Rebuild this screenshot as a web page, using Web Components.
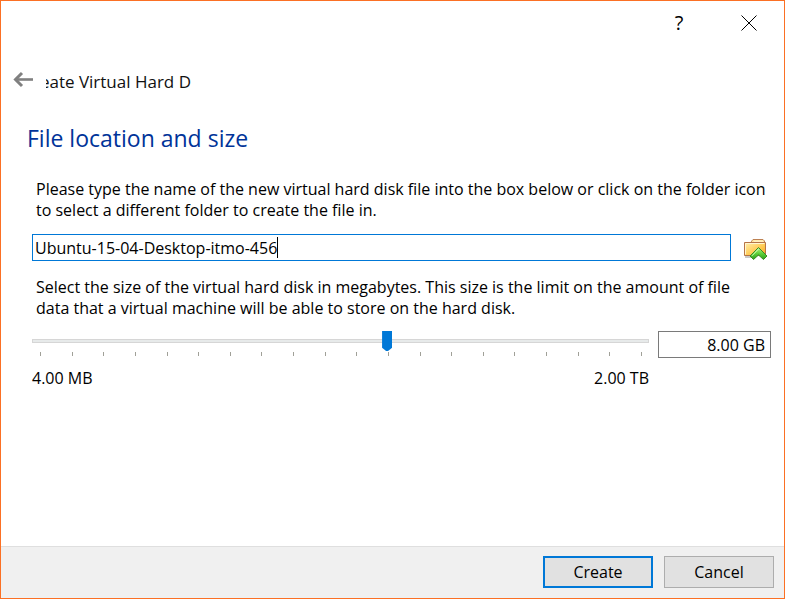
<!DOCTYPE html>
<html lang="en">
<head>
<meta charset="utf-8">
<title>Create Virtual Hard Disk</title>
<style>
html, body { margin: 0; height: 100%; }
body { font: 16px/21px "Open Sans", "Noto Sans", sans-serif; color: #000; background: #fff; }
</style>
</head>
<body>
<wizard-window>
  <title-bar slot="top"></title-bar>
  <wizard-header slot="top" label="eate Virtual Hard D"></wizard-header>
  <wizard-page heading="File location and size">
    <field-note>Please type the name of the new virtual hard disk file into the box below or click on the folder icon<br>to select a different folder to create the file in.</field-note>
    <file-field value="Ubuntu-15-04-Desktop-itmo-456"></file-field>
    <field-note>Select the size of the virtual hard disk in megabytes. This size is the limit on the amount of file<br>data that a virtual machine will be able to store on the hard disk.</field-note>
    <size-field min-label="4.00 MB" max-label="2.00 TB" value="8.00 GB"></size-field>
  </wizard-page>
  <push-button slot="actions" primary>Create</push-button>
  <push-button slot="actions">Cancel</push-button>
</wizard-window>
<script>
function define(name, html, setup) {
  customElements.define(name, class extends HTMLElement {
    constructor() {
      super();
      const t = document.createElement('template');
      t.innerHTML = html;
      this.attachShadow({ mode: 'open' }).appendChild(t.content.cloneNode(true));
      if (setup) setup(this, this.shadowRoot);
    }
  });
}

define('push-button', `
<style>
:host { display: block; }
button { display: block; box-sizing: border-box; width: 110px; height: 32px; padding: 0; border: 1px solid #adadad; background: #e1e1e1; font: inherit; color: inherit; }
:host([primary]) button { border: 2px solid #0078d7; }
</style>
<button type="button"><slot></slot></button>`);

define('title-bar', `
<style>
:host { display: flex; justify-content: flex-end; }
button { width: 70px; height: 43px; padding: 0; border: 0; background: none; display: grid; place-items: center; font: inherit; font-size: 20px; color: #000; }
</style>
<button type="button" aria-label="Help">?</button>
<button type="button" aria-label="Close"><svg width="16" height="16" viewBox="0 0 16 16" stroke="#000"><path d="M.5.5l15 15M15.5.5l-15 15"/></svg></button>`);

define('wizard-header', `
<style>
:host { display: flex; align-items: center; gap: 12px; padding: 22px 12px 0; height: 28px; }
button { padding: 0; border: 0; background: none; width: 21px; height: 20px; }
svg { display: block; }
.title { display: flex; justify-content: flex-end; width: 145px; overflow: hidden; white-space: nowrap; font-size: 17px; color: #111; padding-top: 2px; }
</style>
<button type="button" aria-label="Back"><svg width="22" height="18" viewBox="0 0 22 18" fill="none" stroke="#808080"><path d="M2 8.500H20" stroke-width="2.600"/><path d="M9 2L2.500 8.500L9 15" stroke-width="3"/></svg></button>
<div class="title"><span></span></div>`,
(el, root) => { root.querySelector('span').textContent = el.getAttribute('label'); });

define('wizard-page', `
<style>
:host { display: block; padding: 29px 13px 0 31px; }
h1 { margin: 0 0 26px -5px; font-size: 23px; line-height: 30px; font-weight: 400; color: #003399; }
</style>
<h1></h1><slot></slot>`,
(el, root) => { root.querySelector('h1').textContent = el.getAttribute('heading'); });

define('field-note', `
<style>:host { display: block; padding-left: 4px; white-space: nowrap; }</style><slot></slot>`);

define('file-field', `
<style>
:host { display: flex; align-items: center; gap: 12px; margin: 13px 0 15px; }
.box { position: relative; flex: 1; display: flex; }
input { flex: 1; min-width: 0; box-sizing: border-box; height: 27px; margin-bottom: 1px; padding: 0 2px; border: 1px solid #0078d7; font: inherit; color: #000; background: #fff; outline: 0; }
.caret { position: absolute; top: 3px; width: 1px; height: 21px; background: #000; }
button { padding: 0; margin: 3px 3px 0 0; border: 0; background: none; width: 25px; height: 24px; }
svg { display: block; }
</style>
<div class="box"><input type="text" aria-label="File name" spellcheck="false"><span class="caret"></span></div>
<button type="button" aria-label="Choose folder">
<svg width="25" height="24" viewBox="0 0 25 24">
<defs><linearGradient id="f" x1="0" y1="0" x2="1" y2="1"><stop offset="0" stop-color="#fff0b0"/><stop offset=".6" stop-color="#ffc94f"/><stop offset="1" stop-color="#f5a623"/></linearGradient>
<linearGradient id="g" x1="0" y1="0" x2="0" y2="1"><stop offset="0" stop-color="#b5f58a"/><stop offset=".5" stop-color="#5fd03a"/><stop offset="1" stop-color="#2e9d1c"/></linearGradient></defs>
<path d="M8.500 5V3.200L10 1.500H20L21.500 3V14H8.500Z" fill="#ffe6a0" stroke="#bd8153"/>
<path d="M11 3.200H20" stroke="#fff3cf"/>
<path d="M2 19H13" stroke="#c8c8c8" stroke-width="2"/>
<path d="M1.500 4.500H22.500V17.500H1.500Z" fill="url(#f)" stroke="#b57447"/>
<path d="M2.500 16.500V5.500H21.500" fill="none" stroke="#fff5cf"/>
<path d="M15.500 9.500L24 18L20.500 21.500L15.500 17L10.500 21.500L7 18Z" fill="url(#g)" stroke="#398d25" stroke-linejoin="round"/>
<path d="M15.500 11L9 17.800" stroke="#d4ffb9" fill="none"/>
</svg></button>`,
(el, root) => {
  const input = root.querySelector('input');
  input.value = el.getAttribute('value');
  const place = () => {
    const ctx = document.createElement('canvas').getContext('2d');
    ctx.font = getComputedStyle(input).font;
    root.querySelector('.caret').style.left = Math.round(ctx.measureText(input.value).width + 3) + 'px';
  };
  place();
  input.addEventListener('input', place);
});

define('size-field', `
<style>
:host { display: grid; grid-template-columns: 1fr 113px; column-gap: 9px; margin-top: 12px; }
.range { min-width: 0; }
input[type=range] { appearance: none; -webkit-appearance: none; display: block; width: 100%; height: 20px; margin: 0; background: none; }
input[type=range]::-webkit-slider-runnable-track { box-sizing: border-box; height: 4px; border: 1px solid #d6d6d6; background: #e7eaea; }
input[type=range]::-webkit-slider-thumb { -webkit-appearance: none; width: 10px; height: 20px; margin-top: -9px; border: 0; background: #0078d7; clip-path: polygon(0 0, 100% 0, 100% 84%, 60% 100%, 40% 100%, 0 84%); }
.ticks { display: flex; justify-content: space-between; padding: 1px 7px 0 8px; }
.ticks i { width: 1px; height: 4px; background: #a0a098; }
.labels { display: flex; justify-content: space-between; margin-top: 12px; }
.value { box-sizing: border-box; width: 100%; height: 27px; padding: 0 5px; border: 1px solid #7a7a7a; text-align: right; font: inherit; color: #000; background: #fff; }
</style>
<div class="range">
<input type="range" min="0" max="1000" value="577" aria-label="Disk size">
<div class="ticks" aria-hidden="true"></div>
<div class="labels"><span class="lo"></span><span class="hi"></span></div>
</div>
<input class="value" type="text" aria-label="Size">`,
(el, root) => {
  root.querySelector('.ticks').innerHTML = '<i></i>'.repeat(20);
  root.querySelector('.lo').textContent = el.getAttribute('min-label');
  root.querySelector('.hi').textContent = el.getAttribute('max-label');
  root.querySelector('.value').value = el.getAttribute('value');
});

define('wizard-window', `
<style>
:host { display: flex; flex-direction: column; box-sizing: border-box; min-height: 100%; border: 1px solid #fb7024; background: #fff; }
main { flex: 1; }
footer { display: flex; justify-content: flex-end; gap: 11px; padding: 9px 10px 10px; border-top: 1px solid #dfdfdf; background: #f0f0f0; }
</style>
<slot name="top"></slot>
<main><slot></slot></main>
<footer><slot name="actions"></slot></footer>`);
</script>
</body>
</html>
